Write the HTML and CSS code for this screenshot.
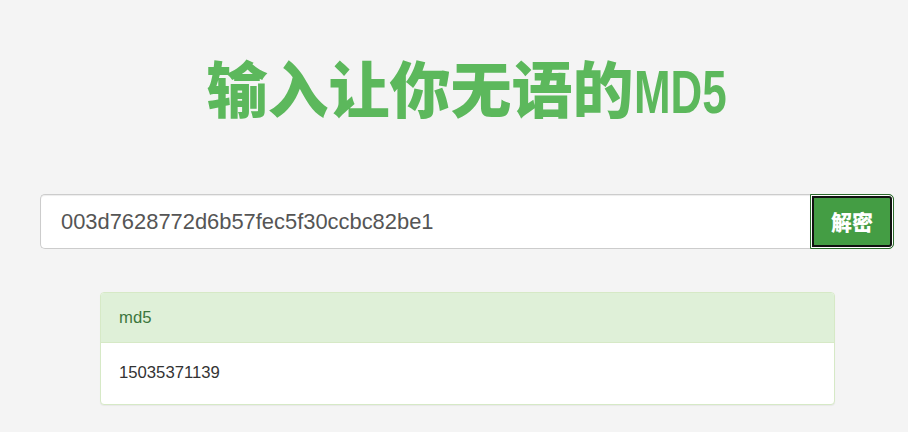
FILE: index.html
```html
<!doctype html>
<html lang="zh-CN">

<head>
	<meta charset="utf-8">
	<meta name="viewport" content="width=device-width, initial-scale=1">
	<title>输入让你无语的MD5</title>
	<link rel="stylesheet" href="styles.css">
</head>

<body>

	<main class="container">

		<h1 class="title">输入让你无语的<span class="title-latin">MD5</span></h1>

		<form class="input-group">
			<input class="form-control" type="text" value="003d7628772d6b57fec5f30ccbc82be1">
			<button class="btn-decode" type="button">解密</button>
		</form>

		<section class="panel">
			<div class="panel-heading">md5</div>
			<div class="panel-body">15035371139</div>
		</section>

	</main>

</body>
</html>
```

FILE: styles.css
```css
:root {
	--font-family: 'Liberation Sans', 'Noto Sans CJK SC', Arial, sans-serif;
	--font-family-heading: 'Noto Sans CJK SC', 'Liberation Sans', sans-serif;
	--bg: #f4f4f4;
	--color: #333;
	--color-main: #5cb85c;
	--color-main-dark: #449d44;
}

*,
::after,
::before {
	box-sizing: border-box;
	margin: 0;
	padding: 0;
}

body {
	min-height: 100vh;
	color: var(--color);
	font: 400 16.7px/1.42 var(--font-family);
	background: var(--bg);
}

.container {
	width: 854px;
	margin-left: 40px;
}

/* Заголовок */
.title {
	padding-top: 53px;
	height: 194px;
	color: var(--color-main);
	font: 900 61px/1.1 var(--font-family-heading);
	text-align: center;
	white-space: nowrap;
}

.title-latin {
	display: inline-block;
	font-family: 'Liberation Sans', sans-serif;
	font-weight: 700;
	transform: scaleX(.72);
	transform-origin: left center;
	margin-right: -35px;
}

/* Поле ввода + кнопка */
.input-group {
	display: flex;
	height: 55px;
}

.form-control {
	flex: 1;
	min-width: 0;
	padding: 0 20px;
	color: #555;
	font: 400 21.9px/1 var(--font-family);
	background: #fff;
	border: 1px solid #ccc;
	border-right: 0;
	border-radius: 5px 0 0 5px;
	box-shadow: inset 0 1px 1px rgba(0, 0, 0, .075);
	outline: none;
}

.btn-decode {
	width: 84px;
	color: #fff;
	font: 900 21px/1 var(--font-family-heading);
	background: var(--color-main-dark);
	border: 1px solid #2b6b2b;
	border-radius: 0 5px 5px 0;
	box-shadow: inset 0 0 0 1px #fff, inset 0 0 0 3px #111;
	cursor: pointer;
}

/* Панель с результатом */
.panel {
	margin: 43px 59px 0 60px;
	background: #fff;
	border: 1px solid #d6e9c6;
	border-radius: 4px;
	box-shadow: 0 1px 1px rgba(0, 0, 0, .05);
	overflow: hidden;
}

.panel-heading {
	height: 50px;
	padding: 13px 18px;
	color: #3c763d;
	background: #dff0d8;
	border-bottom: 1px solid #d6e9c6;
}

.panel-body {
	height: 61px;
	padding: 18px 18px;
}
```
